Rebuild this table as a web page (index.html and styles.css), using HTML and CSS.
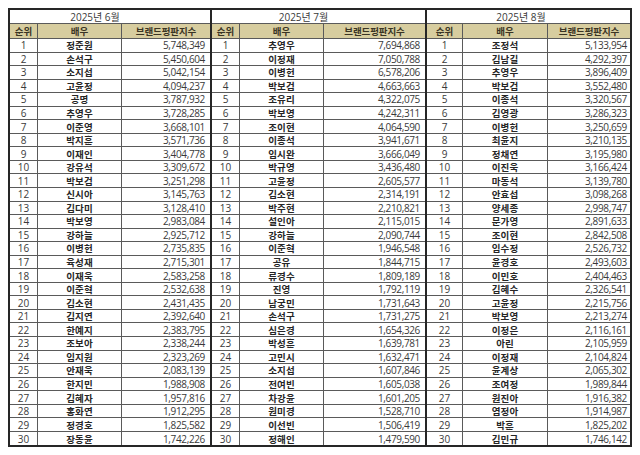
FILE: index.html
```html
<!DOCTYPE html>
<html lang="ko">
<head>
<meta charset="utf-8">
<title>브랜드평판지수</title>
<link rel="stylesheet" href="styles.css">
</head>
<body>
<div class="board">
  <div class="table t1">
    <div class="title">2025년 6월</div>
    <div class="head">순위</div><div class="head">배우</div><div class="head">브랜드평판지수</div>
    <div class="rank">1</div><div class="name">정준원</div><div class="score">5,748,349</div>
    <div class="rank">2</div><div class="name">손석구</div><div class="score">5,450,604</div>
    <div class="rank">3</div><div class="name">소지섭</div><div class="score">5,042,154</div>
    <div class="rank">4</div><div class="name">고윤정</div><div class="score">4,094,237</div>
    <div class="rank">5</div><div class="name">공명</div><div class="score">3,787,932</div>
    <div class="rank">6</div><div class="name">추영우</div><div class="score">3,728,285</div>
    <div class="rank">7</div><div class="name">이준영</div><div class="score">3,668,101</div>
    <div class="rank">8</div><div class="name">박지훈</div><div class="score">3,571,736</div>
    <div class="rank">9</div><div class="name">이재인</div><div class="score">3,404,778</div>
    <div class="rank">10</div><div class="name">강유석</div><div class="score">3,309,672</div>
    <div class="rank">11</div><div class="name">박보검</div><div class="score">3,251,298</div>
    <div class="rank">12</div><div class="name">신시아</div><div class="score">3,145,763</div>
    <div class="rank">13</div><div class="name">김다미</div><div class="score">3,128,410</div>
    <div class="rank">14</div><div class="name">박보영</div><div class="score">2,983,084</div>
    <div class="rank">15</div><div class="name">강하늘</div><div class="score">2,925,712</div>
    <div class="rank">16</div><div class="name">이병헌</div><div class="score">2,735,835</div>
    <div class="rank">17</div><div class="name">육성재</div><div class="score">2,715,301</div>
    <div class="rank">18</div><div class="name">이재욱</div><div class="score">2,583,258</div>
    <div class="rank">19</div><div class="name">이준혁</div><div class="score">2,532,638</div>
    <div class="rank">20</div><div class="name">김소현</div><div class="score">2,431,435</div>
    <div class="rank">21</div><div class="name">김지연</div><div class="score">2,392,640</div>
    <div class="rank">22</div><div class="name">한예지</div><div class="score">2,383,795</div>
    <div class="rank">23</div><div class="name">조보아</div><div class="score">2,338,244</div>
    <div class="rank">24</div><div class="name">임지원</div><div class="score">2,323,269</div>
    <div class="rank">25</div><div class="name">안재욱</div><div class="score">2,083,139</div>
    <div class="rank">26</div><div class="name">한지민</div><div class="score">1,988,908</div>
    <div class="rank">27</div><div class="name">김혜자</div><div class="score">1,957,816</div>
    <div class="rank">28</div><div class="name">홍화연</div><div class="score">1,912,295</div>
    <div class="rank">29</div><div class="name">정경호</div><div class="score">1,825,582</div>
    <div class="rank">30</div><div class="name">장동윤</div><div class="score">1,742,226</div>
  </div>
  <div class="table t2">
    <div class="title">2025년 7월</div>
    <div class="head">순위</div><div class="head">배우</div><div class="head">브랜드평판지수</div>
    <div class="rank">1</div><div class="name">추영우</div><div class="score">7,694,868</div>
    <div class="rank">2</div><div class="name">이정재</div><div class="score">7,050,788</div>
    <div class="rank">3</div><div class="name">이병헌</div><div class="score">6,578,206</div>
    <div class="rank">4</div><div class="name">박보검</div><div class="score">4,663,663</div>
    <div class="rank">5</div><div class="name">조유리</div><div class="score">4,322,075</div>
    <div class="rank">6</div><div class="name">박보영</div><div class="score">4,242,311</div>
    <div class="rank">7</div><div class="name">조이현</div><div class="score">4,064,590</div>
    <div class="rank">8</div><div class="name">이종석</div><div class="score">3,941,671</div>
    <div class="rank">9</div><div class="name">임시완</div><div class="score">3,666,049</div>
    <div class="rank">10</div><div class="name">박규영</div><div class="score">3,436,480</div>
    <div class="rank">11</div><div class="name">고윤정</div><div class="score">2,605,577</div>
    <div class="rank">12</div><div class="name">김소현</div><div class="score">2,314,191</div>
    <div class="rank">13</div><div class="name">박주현</div><div class="score">2,210,821</div>
    <div class="rank">14</div><div class="name">설인아</div><div class="score">2,115,015</div>
    <div class="rank">15</div><div class="name">강하늘</div><div class="score">2,090,744</div>
    <div class="rank">16</div><div class="name">이준혁</div><div class="score">1,946,548</div>
    <div class="rank">17</div><div class="name">공유</div><div class="score">1,844,715</div>
    <div class="rank">18</div><div class="name">류경수</div><div class="score">1,809,189</div>
    <div class="rank">19</div><div class="name">진영</div><div class="score">1,792,119</div>
    <div class="rank">20</div><div class="name">남궁민</div><div class="score">1,731,643</div>
    <div class="rank">21</div><div class="name">손석구</div><div class="score">1,731,275</div>
    <div class="rank">22</div><div class="name">심은경</div><div class="score">1,654,326</div>
    <div class="rank">23</div><div class="name">박성훈</div><div class="score">1,639,781</div>
    <div class="rank">24</div><div class="name">고민시</div><div class="score">1,632,471</div>
    <div class="rank">25</div><div class="name">소지섭</div><div class="score">1,607,846</div>
    <div class="rank">26</div><div class="name">전여빈</div><div class="score">1,605,038</div>
    <div class="rank">27</div><div class="name">차강윤</div><div class="score">1,601,205</div>
    <div class="rank">28</div><div class="name">원미경</div><div class="score">1,528,710</div>
    <div class="rank">29</div><div class="name">이선빈</div><div class="score">1,506,419</div>
    <div class="rank">30</div><div class="name">정해인</div><div class="score">1,479,590</div>
  </div>
  <div class="table t3">
    <div class="title">2025년 8월</div>
    <div class="head">순위</div><div class="head">배우</div><div class="head">브랜드평판지수</div>
    <div class="rank">1</div><div class="name">조정석</div><div class="score">5,133,954</div>
    <div class="rank">2</div><div class="name">김남길</div><div class="score">4,292,397</div>
    <div class="rank">3</div><div class="name">추영우</div><div class="score">3,896,409</div>
    <div class="rank">4</div><div class="name">박보검</div><div class="score">3,552,480</div>
    <div class="rank">5</div><div class="name">이종석</div><div class="score">3,320,567</div>
    <div class="rank">6</div><div class="name">김영광</div><div class="score">3,286,323</div>
    <div class="rank">7</div><div class="name">이병헌</div><div class="score">3,250,659</div>
    <div class="rank">8</div><div class="name">최윤지</div><div class="score">3,210,135</div>
    <div class="rank">9</div><div class="name">정채연</div><div class="score">3,195,980</div>
    <div class="rank">10</div><div class="name">이진욱</div><div class="score">3,166,424</div>
    <div class="rank">11</div><div class="name">마동석</div><div class="score">3,139,780</div>
    <div class="rank">12</div><div class="name">안효섭</div><div class="score">3,098,268</div>
    <div class="rank">13</div><div class="name">양세종</div><div class="score">2,998,747</div>
    <div class="rank">14</div><div class="name">문가영</div><div class="score">2,891,633</div>
    <div class="rank">15</div><div class="name">조이현</div><div class="score">2,842,508</div>
    <div class="rank">16</div><div class="name">임수정</div><div class="score">2,526,732</div>
    <div class="rank">17</div><div class="name">윤경호</div><div class="score">2,493,603</div>
    <div class="rank">18</div><div class="name">이민호</div><div class="score">2,404,463</div>
    <div class="rank">19</div><div class="name">김혜수</div><div class="score">2,326,541</div>
    <div class="rank">20</div><div class="name">고윤정</div><div class="score">2,215,756</div>
    <div class="rank">21</div><div class="name">박보영</div><div class="score">2,213,274</div>
    <div class="rank">22</div><div class="name">이정은</div><div class="score">2,116,161</div>
    <div class="rank">23</div><div class="name">아린</div><div class="score">2,105,959</div>
    <div class="rank">24</div><div class="name">이정재</div><div class="score">2,104,824</div>
    <div class="rank">25</div><div class="name">윤계상</div><div class="score">2,065,302</div>
    <div class="rank">26</div><div class="name">조여정</div><div class="score">1,989,844</div>
    <div class="rank">27</div><div class="name">원진아</div><div class="score">1,916,382</div>
    <div class="rank">28</div><div class="name">염정아</div><div class="score">1,914,987</div>
    <div class="rank">29</div><div class="name">박훈</div><div class="score">1,825,202</div>
    <div class="rank">30</div><div class="name">김민규</div><div class="score">1,746,142</div>
  </div>
</div>
</body>
</html>
```

FILE: styles.css
```css
html, body {
  margin: 0;
  padding: 0;
  background: #ffffff;
}

body {
  font-family: "Open Sans", "Noto Sans CJK KR", sans-serif;
  color: #333;
}

.board {
  display: flex;
  margin: 8px 0 0 8px;
  width: max-content;
}

.table {
  display: grid;
  grid-template-rows: 14px 15px repeat(30, 13.55px);
  border: 2px solid #262626;
  box-sizing: border-box;
}

.table + .table {
  border-left: none;
}

.t1 { grid-template-columns: 28px 84px 88px; }
.t2 { grid-template-columns: 28px 84px 101px; }
.t3 { grid-template-columns: 36px 85px 82px; }

.table > div {
  box-sizing: border-box;
  border-right: 1px solid #5a5a5a;
  border-bottom: 1px solid #5a5a5a;
  display: flex;
  align-items: center;
  justify-content: center;
  white-space: nowrap;
  overflow: hidden;
}

.table > .score {
  border-right: none;
}

.table > div:nth-last-child(-n+3) {
  border-bottom: none;
}

.title {
  grid-column: 1 / span 3;
  border-right: none !important;
  font-size: 10px;
  color: #3a3a3a;
  padding-right: 30px;
}

.t3 .title {
  padding-right: 15px;
}

.head {
  background: #d7cd9f;
  font-family: "Noto Sans CJK KR", sans-serif;
  font-weight: 700;
  font-size: 9.5px;
  color: #3a3424;
  letter-spacing: -0.1px;
}

.table > .head:nth-child(4) {
  border-right: none;
}

.rank {
  font-size: 10px;
  color: #3a3a3a;
}

.name {
  font-family: "Noto Sans CJK KR", sans-serif;
  font-weight: 700;
  font-size: 9.5px;
  color: #262626;
  letter-spacing: 0.1px;
}

.table > .score {
  justify-content: flex-end;
  padding-right: 5px;
  font-size: 10px;
  letter-spacing: -0.35px;
  color: #3a3a3a;
}

.t3 > .score {
  padding-right: 3px;
}
```
